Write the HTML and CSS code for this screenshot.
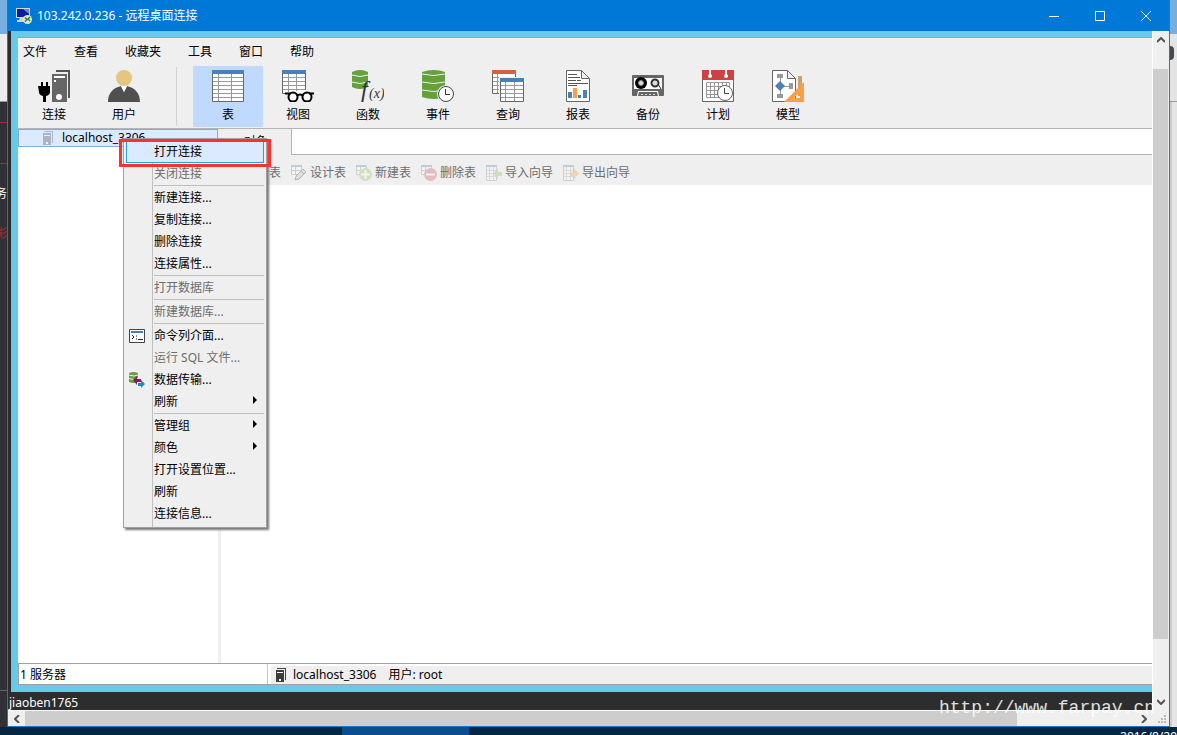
FILE: index.html
```
<!DOCTYPE html>
<html lang="zh-CN">
<head>
	<meta charset="utf-8">
	<title>103.242.0.236 - 远程桌面连接</title>
	<link rel="stylesheet" href="styles.css">
</head>
<body>

<!-- shared shapes -->
<svg class="defs" width="0" height="0" aria-hidden="true">
	<symbol id="mini-table" viewBox="0 0 16 16">
		<path fill="#fff" stroke="#888" d="M.5 1.500h10v8H.5zM.5 5.500h10M4.500 2v8"/>
		<path fill="#4a80b8" d="M0 0h11v2H0z"/>
	</symbol>
	<symbol id="mini-sheet" viewBox="0 0 16 16">
		<path fill="#fff" stroke="#888" d="M.5 1.500h10v14H.5z"/>
		<path stroke="#aaa" d="M1 5.500h9M1 8.500h9M1 11.500h9M3.500 2v13M7.500 2v13"/>
		<path fill="#4a80b8" d="M0 0h11v2H0z"/>
	</symbol>
	<symbol id="mini-server" viewBox="0 0 12 16">
		<path fill="#444" d="M2 1h9v12h-1V2H2z"/>
		<path fill="#3c3c3c" d="M1 3h8v12H1z"/>
		<path fill="#fff" d="M2 5h6v1H2zM4 12h2v2H4z"/>
	</symbol>
</svg>

<div class="behind behind-left">
	<div class="sky"></div>
	<div class="light"></div>
	<div class="dark">
		<span class="rule"></span>
		<span class="rule second"></span>
		<span class="bit">务</span>
		<span class="bit red">影</span>
	</div>
	<div class="dark foot"></div>
</div>

<div class="window">
	<header class="titlebar">
		<svg width="16" height="16" viewBox="0 0 16 16">
			<path fill="#d8d4c8" d="M0 0h14v10H0z"/>
			<path fill="#0a1fa0" d="M1 1h12v8H1z"/>
			<path fill="#5f86ea" d="M7 1h6v5z"/>
			<path fill="#d8d4c8" d="M4 10h4v2H3zM1 12h8v2H1z"/>
			<circle cx="11.500" cy="11.500" r="4.500" fill="#e4e4dc"/>
			<path fill="none" stroke="#2c8a28" stroke-width="1.500" d="M9 9.500l2 2-2 2M14 9l-2 2 2 2"/>
		</svg>
		<h1>103.242.0.236 - 远程桌面连接</h1>
		<div class="caption">
			<button type="button" aria-label="最小化"><svg width="10" height="10"><path d="M0 5.500h10"/></svg></button>
			<button type="button" aria-label="最大化"><svg width="10" height="10"><path d="M.5.5h9v9h-9z"/></svg></button>
			<button type="button" aria-label="关闭"><svg width="10" height="10"><path d="M0 0l10 10M10 0L0 10"/></svg></button>
		</div>
	</header>

	<div class="remote">
		<div class="frame">
			<div class="app">
				<nav class="menubar">
					<button type="button">文件</button>
					<button type="button">查看</button>
					<button type="button">收藏夹</button>
					<button type="button">工具</button>
					<button type="button">窗口</button>
					<button type="button">帮助</button>
				</nav>

				<div class="toolbar">
					<button type="button">
						<svg width="32" height="32" viewBox="0 0 32 32">
							<path fill="none" stroke="#555" stroke-width="2" d="M18 1h13v27"/>
							<path fill="#666" d="M14 4h15v28H14z"/>
							<path fill="#fff" d="M16 6h11v2H16zM16 10h2v2h-2z"/>
							<circle cx="21" cy="27" r="3" fill="#fff"/>
							<path d="M3 12h2v4h3v-4h2v4h2v6q0 3-4 4v6H5v-6q-4-1-4-4l-1-6h3z"/>
						</svg>
						连接
					</button>
					<button type="button">
						<svg width="32" height="32" viewBox="0 0 32 32">
							<circle cx="16" cy="8" r="8" fill="#e5c580"/>
							<path fill="#505050" d="M0 32c0-9 5-14 13-16l3 6 3-6c8 2 13 7 13 16z"/>
							<path fill="#fff" d="M13 16h6l-3 6z"/>
						</svg>
						用户
					</button>
					<span class="divider"></span>
					<button type="button" class="active">
						<svg width="32" height="32" viewBox="0 0 32 32">
							<path fill="#fff" stroke="#666" d="M.5.5h31v31H.5z"/>
							<path stroke="#999" d="M1 7.500h30M1 11.500h30M1 15.500h30M1 19.500h30M1 23.500h30M1 27.500h30M6.500 4v27M19.500 4v27"/>
							<path fill="#4a80b8" d="M0 0h32v4H0z"/>
						</svg>
						表
					</button>
					<button type="button">
						<svg width="32" height="32" viewBox="0 0 32 32">
							<path fill="#fff" d="M0 0h24v23H0z"/>
							<path fill="none" stroke="#666" d="M.5 0v23.500H3M23.500 0v20"/>
							<path stroke="#999" d="M1 7.500h22M1 11.500h22M1 15.500h22M1 19.500h22M6.500 4v18M14.500 4v17"/>
							<path fill="#4a80b8" d="M0 0h24v4H0z"/>
							<g stroke="#000" stroke-width="2">
								<circle cx="11" cy="27" r="4.500" fill="#fff"/>
								<circle cx="25" cy="27" r="4.500" fill="#fff"/>
								<path fill="none" d="M3 23.500h6M15 26q3-3 6 0M27 23.500h5"/>
							</g>
						</svg>
						视图
					</button>
					<button type="button">
						<svg width="32" height="32" viewBox="0 0 32 32">
							<path fill="#64a03c" d="M0 2q8-4 16 0v15q-8 4-16 0z"/>
							<path fill="none" stroke="#efefef" d="M0 5q8 3 16 0M0 12q8 3 16 0"/>
							<text class="fx" x="9" y="27">f</text>
							<text class="fx small" x="17" y="28">(x)</text>
						</svg>
						函数
					</button>
					<button type="button">
						<svg width="32" height="32" viewBox="0 0 32 32">
							<path fill="#64a03c" d="M0 2q12-4 23 0v25q-11 4-23 0z"/>
							<path fill="none" stroke="#efefef" d="M0 4q12 3 23 0M0 12q12 3 23 0M0 20q12 3 23 0"/>
							<circle cx="24" cy="24" r="9" fill="#efefef"/>
							<circle cx="24" cy="24" r="7.500" fill="#fff" stroke="#444"/>
							<path fill="none" stroke="#333" d="M23.500 19v5.500H28"/>
						</svg>
						事件
					</button>
					<button type="button">
						<svg width="32" height="32" viewBox="0 0 32 32">
							<path fill="#fff" stroke="#666" d="M.5.5h23v23H.5z"/>
							<path stroke="#999" d="M1 7.500h22M1 11.500h22M1 15.500h22M1 19.500h22M5.500 4v19"/>
							<path fill="#d86040" d="M0 0h24v4H0z"/>
							<path fill="#efefef" d="M7 7h25v25H7z"/>
							<path fill="#fff" stroke="#666" d="M8.500 8.500h23v23h-23z"/>
							<path stroke="#999" d="M9 15.500h22M9 19.500h22M9 23.500h22M9 27.500h22M13.500 12v19M22.500 12v19"/>
							<path fill="#4a80b8" d="M8 8h24v4H8z"/>
						</svg>
						查询
					</button>
					<button type="button">
						<svg width="32" height="32" viewBox="0 0 32 32">
							<path fill="#fff" stroke="#666" d="M4.500.5h15l8 8v23h-23zM19.500.5v8h8"/>
							<path stroke="#555" d="M6 4.500h9M6 7.500h12M6 10.500h8M15 10.500h4M6 13.500h20M6 15.500h9"/>
							<path fill="#4a80b8" d="M6 22h4v6H6zM16 25h3v3h-3zM21 20h4v8h-4z"/>
							<path fill="#f8a048" d="M11 18h4v10h-4z"/>
						</svg>
						报表
					</button>
					<button type="button">
						<svg width="32" height="32" viewBox="0 0 32 32">
							<rect y="5" width="32" height="21" rx="1" fill="#666"/>
							<path fill="#fff" d="M2 8h28v11H2z"/>
							<circle cx="9" cy="13" r="6"/>
							<circle cx="9" cy="13" r="2.500" fill="#ddd" stroke="#888"/>
							<circle cx="23" cy="13" r="3.500" fill="#ddd" stroke="#333" stroke-width="2"/>
							<path stroke="#333" d="M26 14l3 5"/>
							<path fill="#fff" d="M6 21h20l1 5H5z"/>
							<path fill="#666" d="M7 22h18l1 4H6z"/>
							<path stroke="#ddd" stroke-dasharray="2 2" d="M9 24.500h14"/>
						</svg>
						备份
					</button>
					<button type="button">
						<svg width="32" height="32" viewBox="0 0 32 32">
							<path fill="#fff" stroke="#666" d="M.5.5h31v31H.5z"/>
							<path fill="#d04040" d="M0 0h32v10H0z"/>
							<path stroke="#fff" stroke-width="2" d="M8 0v6M24 0v6"/>
							<circle cx="8" cy="6" r="2" fill="#fff"/>
							<circle cx="24" cy="6" r="2" fill="#fff"/>
							<path fill="none" stroke="#999" d="M4.500 12.500h23v15h-23zM4 16.500h24M4 20.500h24M4 24.500h24M8.500 12v16M12.500 12v16M16.500 12v16M20.500 12v16M24.500 12v16"/>
							<circle cx="23" cy="23" r="7.500" fill="#fff" stroke="#666"/>
							<path fill="none" stroke="#444" d="M22.500 18v5.500H27"/>
						</svg>
						计划
					</button>
					<button type="button">
						<svg width="32" height="32" viewBox="0 0 32 32">
							<path fill="#fff" stroke="#666" d="M.5.5h15l8 8v23H.5zM15.500.5v8h8"/>
							<path stroke="#999" fill="none" d="M8.500 8v18M8 16.500h10"/>
							<path fill="#999" d="M5 4h6v4H5zM5 24h6v4H5zM17 13h4v6h-4z"/>
							<path fill="#4a80b8" d="M8 11l5 5-5 5-5-5z"/>
							<path fill="#c8a468" d="M26 6h4v20h-4z"/>
							<path fill="#f8a048" fill-rule="evenodd" d="M32 12v20H12zM28 22v6h-6z"/>
						</svg>
						模型
					</button>
				</div>

				<div class="work">
					<aside class="tree">
						<a href="#" class="node">
							<svg width="12" height="16"><use href="#mini-server"/></svg>
							localhost_3306
						</a>

						<div class="context">
							<ul class="menu">
								<li><button type="button" class="hot">打开连接</button></li>
								<li><button type="button" disabled>关闭连接</button></li>
								<li class="sep"></li>
								<li><button type="button">新建连接...</button></li>
								<li><button type="button">复制连接...</button></li>
								<li><button type="button">删除连接</button></li>
								<li><button type="button">连接属性...</button></li>
								<li class="sep"></li>
								<li><button type="button" disabled>打开数据库</button></li>
								<li class="sep"></li>
								<li><button type="button" disabled>新建数据库...</button></li>
								<li class="sep"></li>
								<li>
									<button type="button">
										<svg width="16" height="16" viewBox="0 0 16 16">
											<path fill="#fff" stroke="#444" d="M.5 1.500h15v13H.5z"/>
											<path fill="#4a80b8" d="M2 3h12v2H2z"/>
											<path fill="none" stroke="#222" d="M3 7l2 2-2 2M7 8h1M7 11h1M9 11.500h5"/>
										</svg>
										命令列介面...
									</button>
								</li>
								<li><button type="button" disabled>运行 SQL 文件...</button></li>
								<li>
									<button type="button">
										<svg width="16" height="16" viewBox="0 0 16 16">
											<path fill="#64a03c" d="M0 1q5-2 9 0v9q-4 2-9 0z"/>
											<path fill="none" stroke="#efefef" d="M0 3q5 2 9 0M0 6.500q5 2 9 0"/>
											<path fill="#8a1860" d="M4 8l4-4v3h4v3H8v3z"/>
											<path fill="#1890b8" d="M16 12l-4-4v3H9v3h3v2z"/>
										</svg>
										数据传输...
									</button>
								</li>
								<li><button type="button" class="more">刷新</button></li>
								<li class="sep"></li>
								<li><button type="button" class="more">管理组</button></li>
								<li><button type="button" class="more">颜色</button></li>
								<li><button type="button">打开设置位置...</button></li>
								<li><button type="button">刷新</button></li>
								<li><button type="button">连接信息...</button></li>
							</ul>
							<div class="mark"></div>
						</div>
					</aside>

					<main class="pane">
						<div class="tabs">
							<button type="button" class="tab">对象</button>
							<div class="tabfill"></div>
						</div>
						<div class="actions">
							<button type="button" disabled>
								<svg width="16" height="16"><use href="#mini-table"/></svg>打开表
							</button>
							<button type="button" disabled>
								<svg width="16" height="16" viewBox="0 0 16 16">
									<use href="#mini-table"/>
									<path fill="#bbb" stroke="#333" d="M4 15l1-4 7-7 3 3-7 7zM10 6l3 3"/>
								</svg>设计表
							</button>
							<button type="button" disabled>
								<svg width="16" height="16" viewBox="0 0 16 16">
									<use href="#mini-table"/>
									<circle cx="9.500" cy="9.500" r="6.500" fill="#8cc04c"/>
									<path stroke="#fff" stroke-width="2" d="M5 9.500h9M9.500 5v9"/>
								</svg>新建表
							</button>
							<button type="button" disabled>
								<svg width="16" height="16" viewBox="0 0 16 16">
									<use href="#mini-table"/>
									<circle cx="9.500" cy="9.500" r="6.500" fill="#d04848"/>
									<path stroke="#fff" stroke-width="2" d="M5 9.500h9"/>
								</svg>删除表
							</button>
							<button type="button" disabled>
								<svg width="16" height="16" viewBox="0 0 16 16">
									<use href="#mini-sheet"/>
									<path fill="#80b850" d="M7 8.500l5-5V7h4v4h-4v3z"/>
								</svg>导入向导
							</button>
							<button type="button" disabled>
								<svg width="16" height="16" viewBox="0 0 16 16">
									<use href="#mini-sheet"/>
									<path fill="#f09040" d="M16 8.500l-5-5V7H7v4h4v3z"/>
								</svg>导出向导
							</button>
						</div>
						<div class="list"></div>
					</main>
				</div>

				<footer class="status">
					<div class="count">1 服务器</div>
					<div class="info">
						<svg width="12" height="16"><use href="#mini-server"/></svg>
						<span>localhost_3306</span>
						<span>用户: root</span>
					</div>
				</footer>
			</div>
		</div>
		<div class="console">jiaoben1765</div>
	</div>

	<div class="scroll vertical">
		<button type="button" aria-label="向上"><svg width="8" height="6"><path d="M0 5l4-4 4 4"/></svg></button>
		<div class="thumb"></div>
		<button type="button" aria-label="向下"><svg width="8" height="6"><path d="M0 1l4 4 4-4"/></svg></button>
	</div>
	<div class="scroll horizontal">
		<button type="button" aria-label="向左"><svg width="6" height="8"><path d="M5 0L1 4l4 4"/></svg></button>
		<div class="thumb"></div>
		<button type="button" aria-label="向右"><svg width="6" height="8"><path d="M1 0l4 4-4 4"/></svg></button>
	</div>
	<div class="grip">
		<svg width="8" height="8"><path fill="#bbb" d="M6 0h2v2H6zM3 3h2v2H3zM6 3h2v2H6zM0 6h2v2H0zM3 6h2v2H3zM6 6h2v2H6z"/></svg>
	</div>
	<div class="watermark">http://www.farpay.cn</div>
</div>

<div class="behind behind-right">
	<div class="sky"></div>
	<div class="light"><span class="dot"></span></div>
	<div class="page"></div>
</div>

<div class="taskbar">
	<span class="task"></span>
	<span class="clock">2016/8/29</span>
</div>

</body>
</html>
```

FILE: styles.css
```
* {
	box-sizing: border-box;
}
body {
	margin: 0;
	height: 100vh;
	overflow: hidden;
	display: grid;
	grid-template-columns: 7px 1fr 7px;
	grid-template-rows: 1fr 8px;
	font: 12px/16px "Noto Sans", "Noto Sans CJK SC", sans-serif;
	color: #000;
	background: #303136;
}
button {
	margin: 0;
	padding: 0;
	border: 0;
	background: none;
	font: inherit;
	color: inherit;
	white-space: nowrap;
}
button:disabled {
	color: #6d6d6d;
}
svg {
	display: block;
	flex: none;
}
.defs {
	position: absolute;
}

/* desktop behind the window */
.behind {
	display: flex;
	flex-direction: column;
	overflow: hidden;
}
.sky {
	height: 34px;
	background: #76aedd;
}
.light {
	height: 68px;
	background: #ececec;
	border-bottom: 1px solid #999;
}
.dark {
	flex: 1;
	background: #303136;
}
.dark.foot {
	flex: 0 0 37px;
	border-top: 1px solid #666;
}
.rule {
	display: block;
	height: 21px;
	border-bottom: 1px solid #b02830;
}
.rule.second {
	height: 41px;
	margin-bottom: 22px;
}
.bit {
	display: flex;
	justify-content: flex-end;
	height: 40px;
	color: #fff;
}
.bit.red {
	color: #b02830;
}
.behind-right .light {
	display: flex;
	align-items: center;
	background: #e4e4e4;
}
.dot {
	width: 4px;
	height: 14px;
	margin-bottom: 30px;
	border-radius: 0 7px 7px 0;
	background: #444850;
}
.page {
	flex: 1;
	background: #e4e4e4;
	border-left: 2px solid #ccc;
}

/* window */
.window {
	position: relative;
	display: grid;
	grid-template-columns: 1fr 17px;
	grid-template-rows: 31px 1fr 16px;
	min-width: 0;
	border: 1px solid #1979ca;
	border-top: 0;
	background: #efefef;
}
.titlebar {
	grid-column: 1 / 3;
	display: flex;
	align-items: center;
	padding-left: 8px;
	background: #0078d7;
	color: #fff;
}
.titlebar h1 {
	flex: 1;
	margin: 0 0 0 5px;
	font-size: 12px;
	font-weight: normal;
}
.caption {
	display: flex;
	align-self: stretch;
}
.caption button {
	width: 46px;
	display: flex;
	align-items: center;
	justify-content: center;
}
.caption path {
	fill: none;
	stroke: #fff;
}

.remote {
	display: flex;
	flex-direction: column;
	min-width: 0;
	padding-left: 3px;
	background: #2d2d2d;
}
.frame {
	flex: 1;
	display: flex;
	padding: 6px 0 7px 7px;
	background: #66cbeb;
}
.console {
	height: 18px;
	margin-left: -2px;
	line-height: 22px;
	color: #fff;
}
.app {
	flex: 1;
	display: flex;
	flex-direction: column;
	min-width: 0;
	border-top: 1px solid #8aa9b8;
	background: #efefef;
}

.menubar {
	display: flex;
	gap: 27px;
	padding: 5px;
	height: 28px;
}
.toolbar {
	display: flex;
	height: 63px;
	padding-left: 1px;
	border-bottom: 1px solid #b4b4b4;
}
.toolbar button {
	width: 70px;
	height: 61px;
	display: flex;
	flex-direction: column;
	align-items: center;
	gap: 5px;
	padding-top: 4px;
}
.toolbar .active {
	background: #bfd9ff;
}
.divider {
	width: 1px;
	height: 59px;
	margin: 1px 16px 0 17px;
	background: #d2d2d2;
}
.fx {
	font: italic 24px "Liberation Serif", serif;
	fill: #333;
}
.fx.small {
	font-size: 14px;
}

.work {
	flex: 1;
	display: flex;
}
.tree {
	position: relative;
	width: 203px;
	border-right: 3px solid #efefef;
	background: #fff;
}
.node {
	display: flex;
	align-items: center;
	gap: 8px;
	height: 18px;
	padding-left: 23px;
	border: 1px solid #84acdd;
	background: #dceaff;
	color: #000;
	text-decoration: none;
}
.node svg {
	opacity: .3;
}
.pane {
	flex: 1;
	display: flex;
	flex-direction: column;
	min-width: 0;
}
.tabs {
	display: flex;
	height: 26px;
}
.tab {
	width: 70px;
}
.tabfill {
	flex: 1;
	border: solid #b4b4b4;
	border-width: 0 0 1px 1px;
	background: #fff;
}
.actions {
	display: flex;
	align-items: center;
	gap: 10px;
	height: 30px;
	padding: 5px 5px 0;
}
.actions button {
	display: flex;
	align-items: center;
	gap: 3px;
}
.actions svg {
	opacity: .3;
}
.list {
	flex: 1;
	background: #fff;
}

.status {
	display: flex;
	height: 22px;
	border: solid #a0a0a0;
	border-width: 1px 0 1px 1px;
	background: #fff;
}
.count {
	width: 249px;
	padding: 3px 1px;
	border-right: 1px solid #c8c8c8;
}
.info {
	flex: 1;
	display: flex;
	align-items: center;
	gap: 12px;
	margin: 2px 0 0 3px;
	padding-left: 4px;
	background: #efefef;
}
.info svg {
	margin-right: -6px;
}

/* context menu */
.context {
	position: absolute;
	z-index: 2;
	left: 105px;
	top: 9px;
	width: 144px;
}
.menu {
	list-style: none;
	margin: 0;
	padding: 2px;
	border: 1px solid #a0a0a0;
	background: linear-gradient(#c0c0c0, #c0c0c0) 28px 0 / 1px 100% no-repeat #efefef;
	box-shadow: 2px 2px 2px #777;
}
.menu button {
	position: relative;
	display: block;
	width: 100%;
	height: 22px;
	padding-left: 28px;
	text-align: left;
}
.menu svg {
	position: absolute;
	left: 3px;
	top: 3px;
}
.menu .hot {
	border: 1px solid #26a0da;
	padding-left: 27px;
	background: #dceaff;
}
.menu .more::after {
	content: "";
	position: absolute;
	right: 7px;
	top: 5px;
	border: 4px solid transparent;
	border-left-color: #000;
	border-right: 0;
}
.sep {
	height: 2px;
	margin-left: 28px;
	border-top: 1px solid #c0c0c0;
}
.mark {
	position: absolute;
	left: -4px;
	top: 1px;
	width: 152px;
	height: 28px;
	border: 3px solid #fb3232;
}

/* scroll bars */
.scroll {
	display: grid;
	background: #efefef;
}
.scroll button {
	display: flex;
	align-items: center;
	justify-content: center;
}
.scroll path {
	fill: none;
	stroke: #555;
	stroke-width: 2;
}
.thumb {
	background: #cdcdcd;
}
.vertical {
	grid-template-rows: 17px 21fr 570fr 54fr 17px;
	border-left: 1px solid #fff;
}
.vertical .thumb {
	grid-row: 3;
	margin-right: 1px;
}
.vertical button:last-child {
	grid-row: 5;
}
.horizontal {
	grid-template-columns: 17px 992fr 118fr 17px;
	border-top: 1px solid #fff;
}
.horizontal button:last-child {
	grid-column: 4;
}
.grip {
	display: flex;
	align-items: flex-end;
	justify-content: flex-end;
	padding: 3px;
}
.watermark {
	position: absolute;
	right: 14px;
	bottom: 8px;
	font: 18px/20px "Liberation Mono", monospace;
	color: #fff;
	opacity: .85;
}

.taskbar {
	grid-column: 1 / 4;
	display: flex;
	justify-content: space-between;
	overflow: hidden;
	background: #062744;
	color: #fff;
}
.task {
	width: 127px;
	margin-left: 342px;
	background: #0a4f8c;
}
.clock {
	margin-top: 2px;
}
```
